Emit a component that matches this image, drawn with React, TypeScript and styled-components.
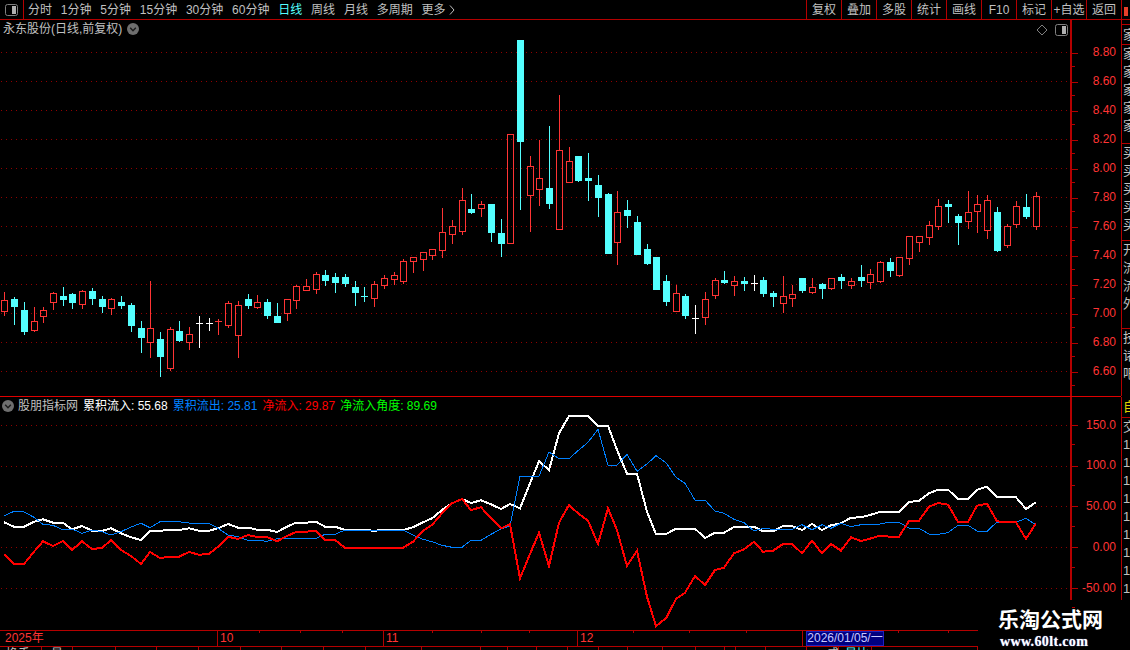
import React from "react";
import styled, { createGlobalStyle } from "styled-components";

const RED = "#b40000";
const LABEL = "#ff3434";
const FONT = `"Liberation Sans", "Noto Sans CJK SC", sans-serif`;

const Global = createGlobalStyle`
  html, body { margin: 0; padding: 0; background: #000; overflow: hidden; }
  * { box-sizing: border-box; }
`;

const Page = styled.div`
  position: relative;
  width: 1130px;
  height: 650px;
  background: #000;
  overflow: hidden;
  display: flex;
  flex-direction: column;
  font: 12px/1 ${FONT};
  color: #c0c0c0;
`;

const TopBar = styled.div`
  height: 20px;
  flex: none;
  display: flex;
  align-items: stretch;
  border-bottom: 1px solid ${RED};
`;
const ToggleCell = styled.div`
  width: 24px;
  flex: none;
  border-right: 1px solid ${RED};
  display: flex;
  align-items: center;
  justify-content: center;
`;
const PeriodList = styled.div`
  display: flex;
  align-items: center;
  gap: 8.8px;
  padding-left: 4px;
  flex: 1;
`;
const Period = styled.span<{ $active?: boolean }>`
  display: inline-flex;
  align-items: center;
  gap: 3px;
  white-space: nowrap;
  color: ${(p) => (p.$active ? "#54ffff" : "#c0c0c0")};
`;
const ToolButton = styled.div`
  width: 35px;
  flex: none;
  border-left: 1px solid ${RED};
  display: flex;
  align-items: center;
  justify-content: center;
  white-space: nowrap;
  letter-spacing: 0;
`;
const TopEnd = styled.div`
  width: 9px;
  flex: none;
  border-left: 1px solid ${RED};
  padding: 7px 0 0 2px;
  &::before {
    content: "";
    display: block;
    width: 4px;
    height: 9px;
    background: #e8402a;
  }
`;

const Row = styled.div<{ $h: number }>`
  height: ${(p) => p.$h}px;
  flex: none;
  display: flex;
  align-items: flex-start;
`;
const Pane = styled.div`
  width: 1070px;
  height: 100%;
  flex: none;
  display: flex;
  flex-direction: column;
`;
const PaneHeader = styled.div<{ $h: number }>`
  height: ${(p) => p.$h}px;
  flex: none;
  display: flex;
  align-items: center;
  white-space: nowrap;
`;
const Title = styled.span`
  margin-left: 3px;
  color: #c0c0c0;
`;
const HeaderChevron = styled.svg<{ $l: number }>`
  margin-left: ${(p) => p.$l}px;
  flex: none;
`;
const CornerIcons = styled.div`
  margin-left: auto;
  margin-right: 2px;
  margin-top: 2px;
  display: flex;
  align-items: center;
  gap: 7px;
`;
const Legend = styled.span<{ $c: string; $l: number }>`
  color: ${(p) => p.$c};
  margin-left: ${(p) => p.$l}px;
`;
const Chart = styled.svg`
  display: block;
  flex: none;
`;

const Axis = styled.div<{ $h: number; $pad: number }>`
  width: 51px;
  height: ${(p) => p.$h}px;
  flex: none;
  border-left: 2px solid ${RED};
  padding-top: ${(p) => p.$pad}px;
  display: flex;
  flex-direction: column;
`;
const Tick = styled.div<{ $h: number }>`
  position: relative;
  height: ${(p) => p.$h}px;
  flex: none;
  text-align: right;
  padding-right: 5px;
  line-height: ${(p) => p.$h}px;
  color: ${LABEL};
  &::before {
    content: "";
    position: absolute;
    left: 0;
    top: 50%;
    width: 6px;
    height: 1px;
    background: ${RED};
  }
  &::after {
    content: "";
    position: absolute;
    left: 0;
    bottom: 0;
    width: 3px;
    height: 1px;
    background: ${RED};
  }
`;

const Strip = styled.div<{ $h: number }>`
  width: 9px;
  height: ${(p) => p.$h}px;
  flex: none;
  border-left: 1px solid ${RED};
  display: flex;
  flex-direction: column;
  overflow: hidden;
`;
const StripGroup = styled.div<{ $h: number; $line?: boolean }>`
  height: ${(p) => p.$h}px;
  flex: none;
  overflow: hidden;
  border-bottom: ${(p) => (p.$line ? `1px solid ${RED}` : "none")};
`;
const StripCell = styled.div<{ $c?: string; $h?: number }>`
  width: 20px;
  height: ${(p) => p.$h ?? 18}px;
  line-height: ${(p) => p.$h ?? 18}px;
  font-size: 13px;
  color: ${(p) => p.$c ?? "#c0c0c0"};
  padding-left: 1px;
`;

const Separator = styled.div`
  width: 1121px;
  height: 1px;
  flex: none;
  background: #e00000;
`;

const TimeAxis = styled.div`
  position: relative;
  width: 978px;
  height: 17px;
  flex: none;
  border-top: 1px solid ${RED};
  border-bottom: 1px solid ${RED};
  display: flex;
  color: ${LABEL};
`;
const TimeCell = styled.div<{ $w: number; $sep?: boolean }>`
  width: ${(p) => p.$w}px;
  flex: none;
  border-left: ${(p) => (p.$sep ? `1px solid ${RED}` : "none")};
  padding-left: ${(p) => (p.$sep ? 2 : 5)}px;
  line-height: 15px;
  white-space: nowrap;
`;
const DateFlag = styled.div`
  width: 78px;
  flex: none;
  background: #000080;
  border: 1px solid #2020c0;
  color: #c8c8ff;
  text-align: center;
  line-height: 13px;
  white-space: nowrap;
`;
const AxisMarks = styled.svg`
  position: absolute;
  left: 0;
  top: 0;
  pointer-events: none;
`;
const StatusStrip = styled.div`
  width: 978px;
  height: 4px;
  flex: none;
  display: flex;
  overflow: hidden;
`;
const StatusCell = styled.div<{ $w: number; $c?: string; $pad?: number }>`
  width: ${(p) => p.$w}px;
  flex: none;
  height: 4px;
  border-right: 1px solid ${RED};
  padding: 1px 0 0 ${(p) => p.$pad ?? 6}px;
  line-height: 12px;
  white-space: nowrap;
  overflow: hidden;
  color: ${(p) => p.$c ?? "#c0c0c0"};
`;

const Watermark = styled.div`
  position: absolute;
  left: 998px;
  top: 606px;
  width: 108px;
  display: flex;
  flex-direction: column;
  gap: 5px;
  color: #fff;
  font-weight: 700;
`;
const MarkTitle = styled.div`
  font: 700 21px/24px "Noto Sans CJK SC", sans-serif;
  white-space: nowrap;
`;
const MarkUrl = styled.div`
  font: 700 14px/14px "Liberation Serif", serif;
  letter-spacing: 0.35px;
  padding-left: 2px;
  white-space: nowrap;
  text-shadow: 0 0 1px #88a0ff;
`;

type K = [string, number, number, number, number];
const K_DATA: K[] = [
  ["r",300,311,292,316],["c",299,307,297,325],["c",310,332,302,335],["r",321,330,307,332],["r",310,316,307,323],
  ["r",293,302,292,310],["c",296,300,287,306],["c",294,303,293,309],["r",291,304,290,309],["c",291,299,288,305],
  ["c",299,307,296,313],["r",299,308,298,315],["c",302,306,296,309],["c",305,326,303,332],["c",328,338,321,353],
  ["r",328,342,281,358],["c",339,357,332,377],["r",329,368,327,371],["c",331,341,321,342],["r",334,342,327,350],
  ["w",323,323,316,348],["w",323,323,318,331],["d",321,322,319,335],["r",303,325,301,328],["r",305,335,301,358],
  ["c",299,306,294,309],["r",302,307,295,309],["c",302,316,299,319],["c",316,323,303,323],["r",299,313,299,321],
  ["r",286,300,285,309],["r",286,290,279,291],["r",274,289,272,294],["c",275,281,270,286],["c",277,283,273,293],
  ["c",277,284,274,287],["c",287,293,281,306],["t",296,296,287,302],["r",284,298,281,307],["r",278,285,275,289],
  ["r",275,279,272,285],["r",261,281,259,284],["r",257,261,257,273],["r",252,259,252,271],["r",249,255,249,260],
  ["r",232,250,208,258],["r",226,234,220,244],["r",200,231,188,235],["c",209,213,194,214],["r",204,208,201,217],
  ["c",204,233,204,242],["c",233,244,219,257],["r",134,243,134,244],["c",40,142,40,210],["r",166,195,156,232],
  ["r",178,189,140,206],["c",188,204,126,209],["r",150,229,95,230],["r",161,182,147,182],["c",156,181,156,182],
  ["c",178,181,153,201],["c",185,198,175,217],["c",194,254,193,254],["r",212,242,191,265],["c",210,216,200,228],
  ["c",222,255,216,255],["c",249,264,244,265],["c",257,290,257,290],["c",281,302,275,306],["r",293,311,285,312],
  ["c",296,316,294,319],["w",318,318,305,334],["r",299,317,292,325],["r",280,295,278,299],["c",280,283,271,284],
  ["r",281,285,276,296],["c",281,284,277,291],["w",283,283,275,291],["c",280,294,277,297],["c",293,297,291,307],
  ["r",296,303,276,313],["r",294,298,285,307],["c",278,291,278,293],["r",287,292,278,294],["c",284,289,283,299],
  ["r",278,288,278,290],["c",277,281,274,289],["r",281,285,278,289],["c",277,281,265,287],["r",274,282,269,289],
  ["r",262,281,261,283],["c",262,271,258,277],["r",257,275,257,277],["r",236,258,236,265],["r",236,242,236,252],
  ["r",225,237,221,245],["r",206,226,199,230],["c",204,207,200,223],["c",216,223,214,245],["r",212,221,191,229],
  ["r",204,211,195,233],["r",200,230,195,239],["c",212,251,207,252],["r",226,245,224,248],["r",206,224,201,228],
  ["c",207,217,194,219],["r",196,226,192,230],
];

const WHITE = [
  522.3,526.7,526.7,521.7,519.3,522.7,522.7,529.3,526,530.7,531,528.3,533.3,537.3,540,530.7,530.7,530,530,528.3,530.7,530.7,528.3,524,527.7,527.7,529.7,529.7,532,526.7,522.7,522.7,521.7,526.7,526.7,530,530,530,530.7,530,530,
  530,527.3,522.3,518.3,510,503.3,499,503,500.3,504.3,509,504,508.3,483.3,461.3,470,433.3,416,416,416,425.7,425.7,450,473.7,473.7,511.7,534,534,528.7,528.7,528.7,538,532.7,532.7,527,
  526.7,526.7,531.3,531.3,526,526,530,524,530,525.3,523.3,517.7,517.3,515,512,512,512,502,500.7,493.3,489.7,489.7,498.7,498.7,489.7,486.7,496.7,497.3,497.3,509,502.3,
];
const BLUE = [
  516,511.3,512,517.3,524.3,525.3,530,529,533.3,530,531.7,535,531.7,527,523.3,527.7,521.7,521.7,521.7,523,523.3,523.3,528.3,535,536.7,540.3,540.3,541.3,538.7,538.3,538.3,538.3,538.3,534.3,534.3,530,530,530,530,530,530,
  530,535,539.3,541.7,545.3,547.3,547.3,540.3,540.3,534.3,529,526,476.3,476.3,476.3,452,458.7,458.7,450.7,442.3,429.3,465.3,465.3,454.3,471.3,464,455.7,462.7,477.3,483.3,500,500,511,513.3,519.3,
  522.7,531,528.3,529.3,529.3,529.3,524.7,529.7,524.7,528.3,523.3,526.7,524.7,524,524,522,522.3,528,528.3,534,534.3,532.7,525.3,525.3,531,531.3,522,522.3,522.3,518.3,525,
];
const NET = [
  554.3,564,564,551.7,541.3,546,541,550,541.3,549,548,540,550,556,564,552,558,556.7,556.7,552,554.7,554,546.7,536.7,539,535,537,537,541.3,536,532,531.7,530.7,540,540,547.7,547.7,547.7,547.7,547.7,547.7,
  547.7,541.7,530.7,525,513.3,503.3,499,510,507.3,518.3,528.3,524.3,578.3,554,532.7,566,522.7,505,513.3,520.7,544,508.3,530,566,550.7,596.7,626,618.3,599,592.7,576,585,570,567.7,553.3,
  549.3,541.7,551.7,550.7,544,544,553.3,540.7,553.3,544,550.7,537.3,541,538.7,535.7,536.7,536.7,521,520.7,506.7,503,504.7,522,522,505.7,503.7,521.3,522.3,522.3,539,523.3,
];

const xAt = (i: number) => Math.round(4.33 + 9.73 * i);
const pts = (a: number[]) => a.map((y, i) => `${xAt(i)},${y}`).join(" ");

const Candle: React.FC<{ k: K; i: number }> = ({ k, i }) => {
  const [t, top, bot, wt, wb] = k;
  const x = xAt(i);
  const cx = x + 0.5;
  if (t === "r") {
    return (
      <g stroke="#ff3434" fill="none" strokeWidth={1}>
        <line x1={cx} x2={cx} y1={wt} y2={top} />
        <line x1={cx} x2={cx} y1={bot} y2={wb} />
        <rect x={x - 2.5} y={top + 0.5} width={6} height={bot - top} />
      </g>
    );
  }
  const col = t === "w" ? "#ffffff" : t === "d" ? "#ff3434" : "#54ffff";
  return (
    <g fill={col}>
      <rect x={x} y={wt} width={1} height={wb - wt} />
      <rect x={x - 3} y={top} width={7} height={Math.max(bot - top, 1)} />
    </g>
  );
};

const Grid: React.FC<{ ys: number[] }> = ({ ys }) => (
  <g stroke="#900000" strokeWidth={1} strokeDasharray="1 4">
    {ys.map((y) => (
      <line key={y} x1={1} x2={1068} y1={y + 0.5} y2={y + 0.5} />
    ))}
  </g>
);

const Toggle = () => (
  <svg width="13" height="12" viewBox="0 0 13 12">
    <rect x="0.5" y="0.5" width="12" height="11" rx="2" fill="none" stroke="#808080" />
    <rect x="7" y="2" width="4" height="8" fill="#b0b0b0" />
  </svg>
);
const Chevron = () => (
  <>
    <circle cx="6" cy="6" r="6" fill="#6e6e6e" />
    <path d="M3.2 4.8 L6 7.8 L8.8 4.8" fill="none" stroke="#1a1a1a" strokeWidth="1.4" />
  </>
);

const MAIN_TICKS = ["8.80","8.60","8.40","8.20","8.00","7.80","7.60","7.40","7.20","7.00","6.80","6.60"];
const SUB_TICKS = ["150.0","100.0","50.00","0.00","-50.00"];
const PERIODS = ["分时","1分钟","5分钟","15分钟","30分钟","60分钟","日线","周线","月线","多周期"];
const TOOLS = ["复权","叠加","多股","统计","画线","F10","标记","+自选","返回"];
const STRIP_GROUPS: [number, string[]][] = [
  [99, ["家","家","家","家","家"]],
  [97, ["买","买","买","买","买"]],
  [88, ["开","流","流","外"]],
  [69, ["技","诸","吧"]],
];
const STATUS_W: [number, string?, string?, number?][] = [
  [42,"换手"],[31,"量",undefined,9],[43],[41],[42],[42],[41],[42],[42],[56],[59],[27],[29],[31],[31],[29],[35],[33],[29],[11],[30],[41],
  [32,"成",undefined,20],[33,"量比","#54ffff"],[106],
];
const TOP_MARKS = [259,300,342,432,481,529,633,689,746,898,948];

export default function App() {
  return (
    <Page>
      <Global />
      <TopBar>
        <ToggleCell><Toggle /></ToggleCell>
        <PeriodList>
          {PERIODS.map((p) => (
            <Period key={p} $active={p === "日线"}>{p}</Period>
          ))}
          <Period>
            更多
            <svg width="6" height="10" viewBox="0 0 6 10">
              <path d="M1 0.5 L5 5 L1 9.5" fill="none" stroke="#c0c0c0" />
            </svg>
          </Period>
        </PeriodList>
        {TOOLS.map((t) => (
          <ToolButton key={t}>{t}</ToolButton>
        ))}
        <TopEnd />
      </TopBar>

      <Row $h={376}>
        <Pane>
          <PaneHeader $h={18}>
            <Title>永东股份(日线,前复权)</Title>
            <HeaderChevron $l={5} width="12" height="12" viewBox="0 0 12 12"><Chevron /></HeaderChevron>
            <CornerIcons>
              <svg width="12" height="12" viewBox="0 0 12 12">
                <path d="M6 1 L11 6 L6 11 L1 6 Z" fill="none" stroke="#808080" />
              </svg>
              <Toggle />
            </CornerIcons>
          </PaneHeader>
          <Chart width={1070} height={358} viewBox="0 38 1070 358" shapeRendering="crispEdges">
            <Grid ys={MAIN_TICKS.map((_, i) => 52 + i * 29)} />
            {K_DATA.map((k, i) => (
              <Candle key={i} k={k} i={i} />
            ))}
          </Chart>
        </Pane>
        <Axis $h={376} $pad={18}>
          {MAIN_TICKS.map((t) => (
            <Tick key={t} $h={29}>{t}</Tick>
          ))}
        </Axis>
        <Strip $h={376}>
          <StripGroup $h={5} $line />
          <StripGroup $h={20} $line>
            <StripCell $h={19}>家</StripCell>
          </StripGroup>
          {STRIP_GROUPS.map(([h, list], i) => (
            <StripGroup key={i} $h={h} $line={i < 3}>
              {list.map((c, j) => (
                <StripCell key={j}>{c}</StripCell>
              ))}
            </StripGroup>
          ))}
        </Strip>
      </Row>
      <Separator />

      <Row $h={233}>
        <Pane>
          <PaneHeader $h={17}>
            <HeaderChevron $l={2} width="12" height="12" viewBox="0 0 12 12"><Chevron /></HeaderChevron>
            <Legend $c="#c0c0c0" $l={4}>股朋指标网</Legend>
            <Legend $c="#ffffff" $l={5}>累积流入: 55.68</Legend>
            <Legend $c="#0080ff" $l={5}>累积流出: 25.81</Legend>
            <Legend $c="#ff0000" $l={5}>净流入: 29.87</Legend>
            <Legend $c="#00ff00" $l={5}>净流入角度: 89.69</Legend>
          </PaneHeader>
          <Chart width={1070} height={216} viewBox="0 414 1070 216" shapeRendering="crispEdges">
            <Grid ys={[425, 466, 506, 547, 588]} />
            <polyline points={pts(WHITE)} fill="none" stroke="#ffffff" strokeWidth={2} />
            <polyline points={pts(BLUE)} fill="none" stroke="#0080ff" strokeWidth={1} />
            <polyline points={pts(NET)} fill="none" stroke="#ff0000" strokeWidth={2} />
          </Chart>
        </Pane>
        <Axis $h={203} $pad={7.6}>
          {SUB_TICKS.map((t) => (
            <Tick key={t} $h={40.75}>{t}</Tick>
          ))}
        </Axis>
        <Strip $h={203}>
          <StripGroup $h={21} $line>
            <StripCell $c="#e0d000" $h={20}>自</StripCell>
          </StripGroup>
          <StripCell $h={18}>交</StripCell>
          {Array.from({ length: 9 }, (_, i) => (
            <StripCell key={i} $h={18}>1</StripCell>
          ))}
        </Strip>
      </Row>

      <TimeAxis>
        <TimeCell $w={217}>2025年</TimeCell>
        <TimeCell $w={166} $sep>10</TimeCell>
        <TimeCell $w={194} $sep>11</TimeCell>
        <TimeCell $w={225} $sep>12</TimeCell>
        <TimeCell $w={4} $sep />
        <DateFlag>2026/01/05/一</DateFlag>
        <AxisMarks width={978} height={4} shapeRendering="crispEdges">
          {TOP_MARKS.map((x) => (
            <rect key={x} x={x} y={0} width={1} height={2} fill={RED} />
          ))}
        </AxisMarks>
      </TimeAxis>
      <StatusStrip>
        {STATUS_W.map(([w, t, c, pad], i) => (
          <StatusCell key={i} $w={w} $c={c} $pad={pad}>{t}</StatusCell>
        ))}
      </StatusStrip>

      <Watermark>
        <MarkTitle>乐淘公式网</MarkTitle>
        <MarkUrl>www.60lt.com</MarkUrl>
      </Watermark>
    </Page>
  );
}
